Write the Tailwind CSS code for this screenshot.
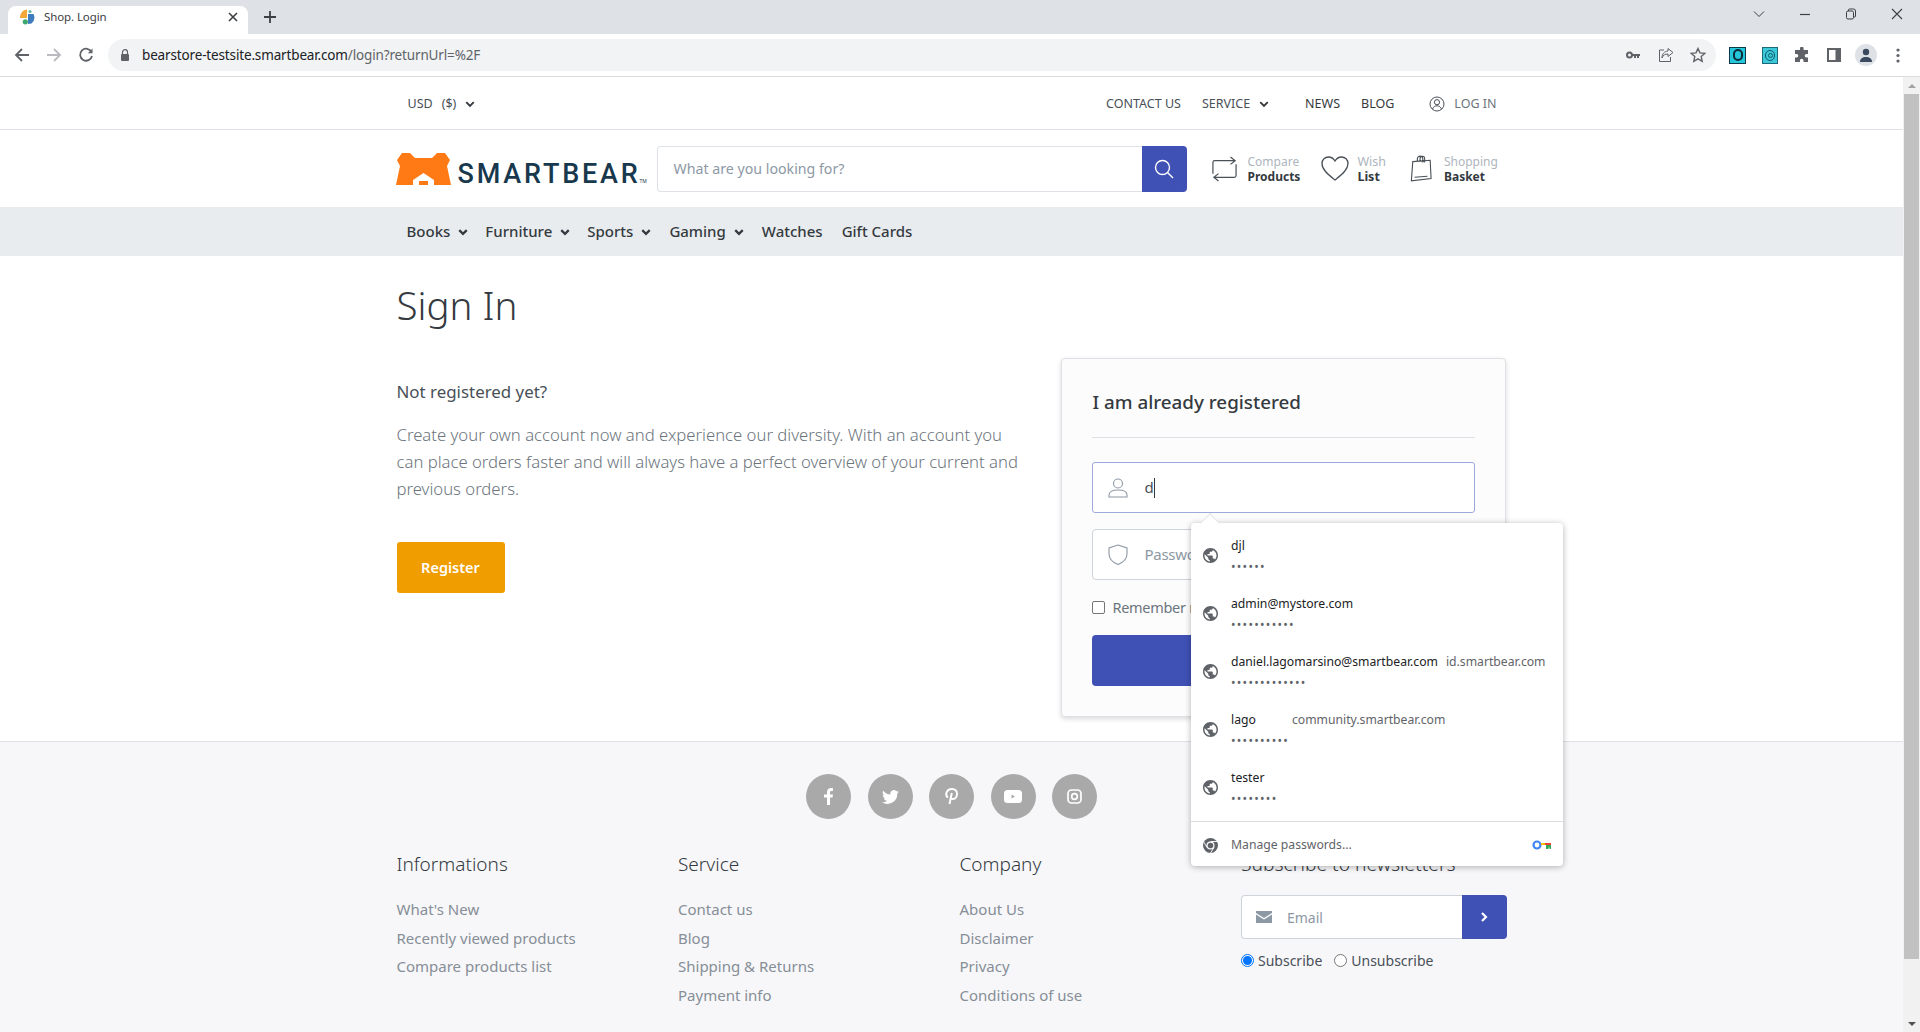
<!DOCTYPE html>
<html lang="en">
<head>
  <meta charset="UTF-8" />
  <meta name="viewport" content="width=device-width, initial-scale=1.0"/>
  <title>Shop. Login</title>
  <script src="https://cdn.jsdelivr.net/npm/@tailwindcss/browser@4"></script>
</head>
<body class="font-['Noto_Sans',sans-serif] bg-white">
<div class="relative w-[1920px] h-[1032px] overflow-hidden flex flex-col">

  <!-- browser tab strip -->
  <div class="h-[34px] shrink-0 bg-[#dee1e6] flex items-end">
    <div class="ml-2 w-[240px] h-[28px] bg-white rounded-t-lg flex items-center pl-[11px] pr-[9px] pb-[6px] text-[#3c4043]">
      <svg class="w-4 h-4 shrink-0" viewBox="0 0 16 16"><path d="M1 9C1 4 4 1 8 0.5V9z" fill="#f4a637"/><circle cx="11" cy="2.5" r="1.6" fill="#67b7a5"/><path d="M9 5h5.5a8 8 0 0 1-2 9.5L9 15z" fill="#3d7dbe"/><circle cx="6.3" cy="12.8" r="2.6" fill="#3fa66d"/></svg>
      <span class="ml-[9px] text-[11.5px] tracking-[-0.1px]">Shop. Login</span>
      <svg class="w-3 h-3 ml-auto" viewBox="0 0 12 12" fill="none" stroke="#3c4043" stroke-width="1.6"><path d="M2 2l8 8M10 2l-8 8"/></svg>
    </div>
    <svg class="w-3.5 h-3.5 ml-[15px] mb-[10px]" viewBox="0 0 14 14" fill="none" stroke="#3c4043" stroke-width="1.8"><path d="M7 1v12M1 7h12"/></svg>
    <div class="ml-auto self-start flex items-center h-[28px] text-[#3c4043]">
      <svg class="w-3 h-3 mr-[34px]" viewBox="0 0 12 12" fill="none" stroke="#3c4043"><path d="M1 3.500l5 5 5-5"/></svg>
      <svg class="w-3 h-3 mr-[34px]" viewBox="0 0 12 12" fill="none" stroke="#3c4043" stroke-width="1.2"><path d="M1 6.500h10"/></svg>
      <svg class="w-3 h-3 mr-[34px]" viewBox="0 0 12 12" fill="none" stroke="#3c4043"><rect x="1.500" y="3" width="7" height="8" rx="1.500"/><path d="M3.500 3V2a1 1 0 0 1 1-1h4a2 2 0 0 1 2 2v5a1 1 0 0 1-1 1h-1"/></svg>
      <svg class="w-3 h-3 mr-[17px]" viewBox="0 0 12 12" fill="none" stroke="#3c4043" stroke-width="1.1"><path d="M1 1l10 10M11 1L1 11"/></svg>
    </div>
  </div>

  <!-- browser toolbar -->
  <div class="h-[43px] shrink-0 bg-white border-b border-[#dadce0] flex items-center">
    <svg class="w-4 h-4 ml-[14px]" viewBox="0 0 16 16" fill="none" stroke="#5f6368" stroke-width="1.8"><path d="M15 8H2M8 2L2 8l6 6"/></svg>
    <svg class="w-4 h-4 ml-[16px]" viewBox="0 0 16 16" fill="none" stroke="#b9bbbe" stroke-width="1.8"><path d="M1 8h13M8 2l6 6-6 6"/></svg>
    <svg class="w-4 h-4 ml-[16px]" viewBox="0 0 16 16" fill="none" stroke="#5f6368" stroke-width="1.8"><path d="M13.500 5A6 6 0 1 0 14 9"/><path d="M14.500 1.500v4.700H9.800z" fill="#5f6368" stroke="none"/></svg>
    <div class="ml-[14px] w-[1608px] h-[32px] bg-[#f1f3f4] rounded-full flex items-center">
      <svg class="w-2.5 h-3 ml-[12px]" viewBox="0 0 10 12"><path d="M2.500 5V3.200a2.500 2.500 0 0 1 5 0V5" fill="none" stroke="#5f6368" stroke-width="1.2"/><rect x="1" y="5" width="8" height="7" rx="1" fill="#5f6368"/></svg>
      <span class="ml-[12px] pt-[1px] text-[13.500px] tracking-[-0.15px] text-[#202124]">bearstore-testsite.smartbear.com<span class="text-[#5f6368]">/login?returnUrl=%2F</span></span>
      <svg class="w-4 h-4 ml-auto" viewBox="0 0 16 16"><circle cx="4.500" cy="8" r="2.500" fill="none" stroke="#5f6368" stroke-width="2"/><path d="M7 7h8v2h-1v2h-2V9h-1v2H9V9H7z" fill="#5f6368"/></svg>
      <svg class="w-4 h-4 ml-[17px]" viewBox="0 0 16 16" fill="none" stroke="#5f6368"><path d="M10 1.500l5 4-5 4V7C7 7 5 8 4 11c0-4 2-6.500 6-7z"/><path d="M6 3H1.500v11.500h11V10"/></svg>
      <svg class="w-4 h-4 ml-[16px] mr-[10px]" viewBox="0 0 16 16" fill="none" stroke="#5f6368" stroke-width="1.4"><path d="M8 1.500l2 4.400 4.800.5-3.600 3.200 1 4.700L8 11.900l-4.200 2.400 1-4.700L1.200 6.400 6 5.900z"/></svg>
    </div>
    <div class="w-[17px] h-[17px] ml-[13px] bg-[#26c6da] border border-[#0b3a4a] flex items-center justify-center"><div class="w-[10px] h-[12px] rounded-full border-2 border-[#0b2a3a]"></div></div>
    <div class="w-[16px] h-[17px] ml-[16px] bg-[#3cc8d8] border border-[#1b6a7a] flex items-center justify-center"><div class="w-[10px] h-[11px] rounded-full border border-[#0f5a6a] flex items-center justify-center"><div class="w-[5px] h-[5px] rounded-full border border-[#0f5a6a]"></div></div></div>
    <svg class="w-4 h-4 ml-[16px]" viewBox="0 0 16 16" fill="#5f6368"><path d="M6 1.500a1.800 1.800 0 0 1 3.600 0V3H14v4h-1.500a1.800 1.800 0 0 0 0 3.600H14V15H9.500v-1.500a1.800 1.800 0 0 0-3.600 0V15H1v-4.500h1.500a1.800 1.800 0 0 0 0-3.600H1V3h5z"/></svg>
    <svg class="w-[14px] h-[14px] ml-[17px]" viewBox="0 0 14 14"><rect width="14" height="14" fill="#5f6368"/><rect x="2" y="2" width="6.500" height="10" fill="#fff"/></svg>
    <div class="w-[22px] h-[22px] ml-[14px] rounded-full bg-[#dee1e6] flex items-center justify-center">
      <svg class="w-3.5 h-3.5" viewBox="0 0 14 14" fill="#3c4a5f"><circle cx="7" cy="4" r="3.200"/><path d="M1 14c0-3.500 2.500-5 6-5s6 1.500 6 5z"/></svg>
    </div>
    <svg class="w-1 h-[15px] ml-[19px]" viewBox="0 0 4 15" fill="#5f6368"><circle cx="2" cy="2" r="1.600"/><circle cx="2" cy="7.500" r="1.600"/><circle cx="2" cy="13" r="1.600"/></svg>
  </div>

  <!-- page + scrollbar -->
  <div class="flex flex-1 min-h-0">
    <div class="w-[1903px] shrink-0 overflow-hidden">

      <!-- top links -->
      <div class="h-[53px] border-b border-[#dee2e6]">
        <div class="w-[1140px] mx-auto px-[15px] pt-[2px] h-full flex items-center text-[12.500px] text-[#495057]">
          <span class="ml-[11px]">USD</span>
          <span class="ml-[9px]">($)</span>
          <svg class="w-2.5 h-2.5 ml-[9px]" viewBox="0 0 8 8" fill="none" stroke="#343a40" stroke-width="1.500"><path d="M1 2.500l3 3 3-3"/></svg>
          <span class="ml-auto">CONTACT US</span>
          <span class="ml-[21px]">SERVICE</span>
          <svg class="w-2.5 h-2.5 ml-[9px]" viewBox="0 0 8 8" fill="none" stroke="#343a40" stroke-width="1.500"><path d="M1 2.500l3 3 3-3"/></svg>
          <span class="ml-[36px] text-[#343a40]">NEWS</span>
          <span class="ml-[21px] text-[#343a40]">BLOG</span>
          <svg class="w-4 h-4 ml-[35px] -mt-[1px]" viewBox="0 0 16 16" fill="none" stroke="#495057"><circle cx="8" cy="8" r="7"/><circle cx="8" cy="6.200" r="2.600"/><path d="M3.500 13c.8-2.200 2.500-3.200 4.500-3.200s3.700 1 4.500 3.200"/></svg>
          <span class="ml-[9px] mr-[10px] text-[#6c757d]">LOG IN</span>
        </div>
      </div>

      <!-- logo, search, tools -->
      <div class="h-[77px]">
        <div class="w-[1140px] mx-auto pl-[15px] pr-[16px] h-full flex items-center">
          <div class="w-[260px] shrink-0 flex items-end">
            <svg class="w-[55px] h-[32px] shrink-0 -ml-[1px]" viewBox="0 0 55 32"><path d="M6 0h8l5 5h17l5-5h8l5 7-3 6 4 19H0l4-19-3-6z" fill="#ff7a14"/><path d="M17 32v-5l10.500-7L38 27v5h-6v-4h-9v4z" fill="#fff"/><rect x="23" y="28" width="9" height="4" fill="#ff7a14"/></svg>
            <span class="ml-[7px] font-['Roboto',sans-serif] font-medium text-[#17384d] text-[27px] leading-[27px] tracking-[2.800px] translate-y-[3px]">SMARTBEAR</span>
            <span class="text-[5px] text-[#17384d] leading-[8px] -ml-[1px]">TM</span>
          </div>
          <div class="w-[530px] h-[46px] shrink-0 flex">
            <div class="flex-1 border border-[#dee2e6] border-r-0 rounded-l-[4px] flex items-center pl-[16px] text-[14.200px] text-[#8d98a5]">What are you looking for?</div>
            <div class="w-[45px] bg-[#3f51b5] rounded-r-[4px] flex items-center justify-center">
              <svg class="w-5 h-5" viewBox="0 0 20 20" fill="none" stroke="#fff" stroke-width="1.400"><circle cx="8.500" cy="8.500" r="7"/><path d="M13.500 13.500L19 19"/></svg>
            </div>
          </div>
          <svg class="w-[25px] h-[28px] ml-[25px]" viewBox="0 0 27 28" fill="none" stroke="#495057" stroke-width="1.300"><path d="M20 1l5 4-5 4M24.500 5H3a2 2 0 0 0-2 2v12M7 27l-5-4 5-4M2.500 23H24a2 2 0 0 0 2-2V9"/></svg>
          <div class="ml-[11px] pt-[2px] text-[12px] leading-[14.500px]">
            <div class="text-[#adb5bd]">Compare</div>
            <div class="text-[#343a40] font-bold">Products</div>
          </div>
          <svg class="w-[28px] h-[25px] ml-[21px]" viewBox="0 0 28 25" fill="none" stroke="#495057" stroke-width="1.300"><path d="M14 24C8 19 1 14 1 7.500 1 3.500 4 1 7.500 1c3 0 5 1.500 6.500 4 1.500-2.500 3.500-4 6.500-4C24 1 27 3.500 27 7.500 27 14 20 19 14 24z"/></svg>
          <div class="ml-[8px] pt-[2px] text-[12.500px] leading-[14.500px]">
            <div class="text-[#adb5bd]">Wish</div>
            <div class="text-[#343a40] font-bold">List</div>
          </div>
          <svg class="w-[22px] h-[29px] ml-[24px]" viewBox="0 0 24 29" fill="none" stroke="#495057" stroke-width="1.200"><path d="M3 7l19-1.500 1 20L1.500 28zM8 7V4c0-4 6-4 6 0v4M11 6V3.500c0-3 5-3.500 5 0V8M5 24l14-1"/></svg>
          <div class="ml-[12px] pt-[2px] text-[12px] leading-[14.500px]">
            <div class="text-[#adb5bd]">Shopping</div>
            <div class="text-[#343a40] font-bold">Basket</div>
          </div>
        </div>
      </div>

      <!-- main nav -->
      <div class="h-[49px] bg-[#e9ecef]">
        <div class="w-[1140px] mx-auto px-[15px] h-full flex items-center text-[15px] font-medium text-[#343a40]">
          <span class="ml-[10px]">Books</span>
          <svg class="w-2.5 h-2.5 ml-[8px]" viewBox="0 0 8 8" fill="none" stroke="#343a40" stroke-width="1.800"><path d="M1 2.500l3 3 3-3"/></svg>
          <span class="ml-[17px]">Furniture</span>
          <svg class="w-2.5 h-2.5 ml-[8px]" viewBox="0 0 8 8" fill="none" stroke="#343a40" stroke-width="1.800"><path d="M1 2.500l3 3 3-3"/></svg>
          <span class="ml-[17px]">Sports</span>
          <svg class="w-2.5 h-2.5 ml-[8px]" viewBox="0 0 8 8" fill="none" stroke="#343a40" stroke-width="1.800"><path d="M1 2.500l3 3 3-3"/></svg>
          <span class="ml-[18px]">Gaming</span>
          <svg class="w-2.5 h-2.5 ml-[8px]" viewBox="0 0 8 8" fill="none" stroke="#343a40" stroke-width="1.800"><path d="M1 2.500l3 3 3-3"/></svg>
          <span class="ml-[18px]">Watches</span>
          <span class="ml-[19px]">Gift Cards</span>
        </div>
      </div>

      <!-- sign in -->
      <div class="h-[486px] border-b border-[#dee2e6]">
        <div class="w-[1140px] mx-auto pl-[15px] pr-[16px]">
          <h1 class="pt-[22px] text-[38.500px] leading-[54px] font-light text-[#343a40]">Sign In</h1>
          <div class="mt-[26px] flex justify-between items-start">
            <div class="w-[630px] pt-[22px]">
              <h2 class="text-[16.900px] leading-[24px] text-[#495057]">Not registered yet?</h2>
              <p class="mt-[17px] text-[16.700px] leading-[27px] font-light text-[#6c757d]">Create your own account now and experience our diversity. With an account you can place orders faster and will always have a perfect overview of your current and previous orders.</p>
              <button class="mt-[40px] w-[108px] h-[51px] pt-[1px] rounded-[3px] bg-[#f09d00] text-white text-[14.500px] font-semibold">Register</button>
            </div>
            <div class="w-[445px] h-[359px] p-[30px] bg-[#fcfcfc] border border-[#dee2e6] rounded-[4px] shadow-[0_2px_5px_rgba(0,0,0,0.15)]">
              <h3 class="pl-[1px] text-[18.800px] leading-[26px] font-medium text-[#343a40]">I am already registered</h3>
              <div class="mt-[22px] border-t border-[#dee2e6]"></div>
              <div class="mt-[24px] h-[51px] bg-white border border-[#9fa8da] rounded-[3px] flex items-center">
                <svg class="w-5 h-5 ml-[15px] shrink-0" viewBox="0 0 20 20" fill="none" stroke="#8d98a5" stroke-width="1.100"><circle cx="10" cy="5.500" r="4.500"/><path d="M1 19v-2c0-3 3-5 9-5s9 2 9 5v2z"/></svg>
                <span class="ml-[17px] text-[15px] text-[#495057]">d</span>
                <div class="w-px h-[20px] bg-[#343a40]"></div>
              </div>
              <div class="mt-[16px] h-[51px] bg-white border border-[#ced4da] rounded-[4px] flex items-center">
                <svg class="w-5 h-[21px] ml-[15px] shrink-0" viewBox="0 0 20 21" fill="none" stroke="#8d98a5" stroke-width="1.100"><path d="M10 1l9 3v6c0 5-4 8.500-9 10.500C5 18.500 1 15 1 10V4z"/></svg>
                <span class="ml-[17px] text-[15px] tracking-[-0.3px] text-[#8d98a5]">Password</span>
              </div>
              <label class="mt-[17px] flex items-center h-[21px]">
                <span class="w-[13px] h-[13px] border border-[#767676] rounded-[2px] bg-white"></span>
                <span class="ml-[8px] text-[14.500px] tracking-[-0.3px] text-[#6c757d]">Remember me</span>
              </label>
              <div class="mt-[17px] h-[51px] bg-[#3f51b5] rounded-[4px]"></div>
            </div>
          </div>
        </div>
      </div>

      <!-- footer -->
      <div class="h-[300px] bg-[#f7f7fa]">
        <div class="pt-[32px] flex justify-center gap-[16.500px]">
          <div class="w-[45px] h-[45px] rounded-full bg-[#a9a9a9] flex items-center justify-center">
            <svg class="w-[9px] h-[17px]" viewBox="0 0 9 17" fill="#fff"><path d="M3 17V9.500H0V6.500h3V4.500C3 1.500 4.500 0 7 0h2v3H7.500C6.300 3 6 3.600 6 4.500v2h3l-.5 3H6V17z"/></svg>
          </div>
          <div class="w-[45px] h-[45px] rounded-full bg-[#a9a9a9] flex items-center justify-center">
            <svg class="w-[17px] h-[14px]" viewBox="0 0 17 14" fill="#fff"><path d="M17 1.700c-.6.300-1.300.500-2 .600.700-.400 1.300-1.100 1.500-1.900-.7.400-1.400.700-2.200.800A3.500 3.500 0 0 0 8.400 4.400 9.800 9.800 0 0 1 1.200.7a3.500 3.500 0 0 0 1.100 4.600c-.6 0-1.100-.2-1.600-.4 0 1.700 1.200 3.100 2.800 3.400-.5.100-1 .2-1.600.1.500 1.400 1.700 2.300 3.300 2.400A7 7 0 0 1 0 12.300 10 10 0 0 0 15.300 3.500c.7-.5 1.300-1.100 1.700-1.800z"/></svg>
          </div>
          <div class="w-[45px] h-[45px] rounded-full bg-[#a9a9a9] flex items-center justify-center">
            <svg class="w-[13px] h-[17px]" viewBox="0 0 13 17" fill="none" stroke="#fff" stroke-width="2"><path d="M3 9.500C1.500 8.500 1 7 1.300 5.500 2 2.500 4.500 1 7 1c3 0 5 2 5 4.500 0 3-1.500 5.500-4 5.500-1.200 0-2-.8-2-1.500"/><path d="M6.800 5L4.500 16"/></svg>
          </div>
          <div class="w-[45px] h-[45px] rounded-full bg-[#a9a9a9] flex items-center justify-center">
            <svg class="w-[18px] h-[13px]" viewBox="0 0 18 13"><rect width="18" height="13" rx="3.500" fill="#fff"/><path d="M7.500 4.500l3.500 2-3.500 2z" fill="#a9a9a9"/></svg>
          </div>
          <div class="w-[45px] h-[45px] rounded-full bg-[#a9a9a9] flex items-center justify-center">
            <svg class="w-[15px] h-[15px]" viewBox="0 0 15 15" fill="none" stroke="#fff" stroke-width="1.700"><rect x="1" y="1" width="13" height="13" rx="3.500"/><circle cx="7.500" cy="7.500" r="2.800"/></svg>
          </div>
        </div>
        <div class="w-[1140px] mx-auto px-[15px] mt-[32px] grid grid-cols-[281.500px_281.500px_281.500px_1fr]">
          <div>
            <h4 class="text-[19px] leading-[26px] font-light text-[#343a40]">Informations</h4>
            <ul class="mt-[18px] text-[15px] leading-[28.700px] text-[#868e96]">
              <li>What's New</li>
              <li>Recently viewed products</li>
              <li>Compare products list</li>
            </ul>
          </div>
          <div>
            <h4 class="text-[19px] leading-[26px] font-light text-[#343a40]">Service</h4>
            <ul class="mt-[18px] text-[15px] leading-[28.700px] text-[#868e96]">
              <li>Contact us</li>
              <li>Blog</li>
              <li>Shipping &amp; Returns</li>
              <li>Payment info</li>
            </ul>
          </div>
          <div>
            <h4 class="text-[19px] leading-[26px] font-light text-[#343a40]">Company</h4>
            <ul class="mt-[18px] text-[15px] leading-[28.700px] text-[#868e96]">
              <li>About Us</li>
              <li>Disclaimer</li>
              <li>Privacy</li>
              <li>Conditions of use</li>
            </ul>
          </div>
          <div>
            <h4 class="text-[19.300px] leading-[26px] font-light text-[#343a40]">Subscribe to newsletters</h4>
            <div class="mt-[18px] flex h-[44px]">
              <div class="flex-1 bg-white border border-[#ced4da] border-r-0 rounded-l-[4px] flex items-center">
                <svg class="w-4 h-3 ml-[14px]" viewBox="0 0 16 12" fill="#8d98a5"><path d="M0 0h16v2L8 7 0 2z"/><path d="M0 3.500V12h16V3.500L8 8.500z"/></svg>
                <span class="ml-[15px] text-[14px] text-[#8d98a5]">Email</span>
              </div>
              <div class="w-[45px] bg-[#3f51b5] rounded-r-[4px] flex items-center justify-center">
                <svg class="w-2 h-2.5" viewBox="0 0 8 10" fill="none" stroke="#fff" stroke-width="2.200"><path d="M2 1l4 4-4 4"/></svg>
              </div>
            </div>
            <div class="mt-[11px] flex items-center text-[14px] text-[#495057]">
              <span class="w-[13px] h-[13px] rounded-full border border-[#0075ff] flex items-center justify-center"><span class="w-[9px] h-[9px] rounded-full bg-[#0075ff]"></span></span>
              <span class="ml-[4px]">Subscribe</span>
              <span class="ml-[12px] w-[13px] h-[13px] rounded-full border border-[#767676] bg-white"></span>
              <span class="ml-[4px]">Unsubscribe</span>
            </div>
          </div>
        </div>
      </div>
    </div>

    <!-- scrollbar -->
    <div class="w-[17px] shrink-0 bg-[#f1f1f1] flex flex-col items-center">
      <svg class="w-2 h-1 mt-[7px]" viewBox="0 0 8 4" fill="#a3a3a3"><path d="M4 0l4 4H0z"/></svg>
      <div class="w-[15px] h-[865px] mt-[6px] bg-[#c1c1c1]"></div>
      <svg class="w-2 h-1 mt-auto mb-[6px]" viewBox="0 0 8 4" fill="#505050"><path d="M0 0h8L4 4z"/></svg>
    </div>
  </div>

  <!-- saved passwords dropdown -->
  <div class="absolute left-[1191px] top-[523px] w-[372px] h-[343px] bg-white rounded-[4px] shadow-[0_1px_6px_rgba(0,0,0,0.3)] text-[12.200px]">
    <div class="absolute left-[12px] -top-[7px] w-[14px] h-[14px] rotate-45 bg-white border-l border-t border-[#e5e5e5]"></div>
    <div class="relative pt-[1px] h-[298px] flex flex-col">
      <div class="h-[58px] pt-[2px] flex items-center pl-[12px]">
        <svg class="w-[15px] h-[15px] mt-[2px] shrink-0" viewBox="2 2 20 20" fill="#5f6368"><path d="M12 2C6.480 2 2 6.480 2 12s4.480 10 10 10 10-4.480 10-10S17.520 2 12 2zm-1 17.930c-3.950-.490-7-3.850-7-7.930 0-.620.080-1.210.210-1.790L9 15v1c0 1.100.900 2 2 2v1.930zm6.900-2.540c-.260-.810-1-1.390-1.900-1.390h-1v-3c0-.550-.450-1-1-1H8v-2h2c.550 0 1-.450 1-1V7h2c1.100 0 2-.900 2-2v-.410c2.930 1.190 5 4.060 5 7.410 0 2.080-.800 3.970-2.100 5.390z"/></svg>
        <div class="ml-[13px]"><div class="h-[26px] leading-[26px] text-[#202124]">djl</div><div class="text-[12px] tracking-[1.300px] leading-[16px] text-[#5f6368]">••••••</div></div>
      </div>
      <div class="h-[58px] pt-[2px] flex items-center pl-[12px]">
        <svg class="w-[15px] h-[15px] mt-[2px] shrink-0" viewBox="2 2 20 20" fill="#5f6368"><path d="M12 2C6.480 2 2 6.480 2 12s4.480 10 10 10 10-4.480 10-10S17.520 2 12 2zm-1 17.930c-3.950-.490-7-3.850-7-7.930 0-.620.080-1.210.210-1.790L9 15v1c0 1.100.900 2 2 2v1.930zm6.900-2.540c-.260-.810-1-1.390-1.900-1.390h-1v-3c0-.550-.450-1-1-1H8v-2h2c.550 0 1-.450 1-1V7h2c1.100 0 2-.900 2-2v-.410c2.930 1.190 5 4.060 5 7.410 0 2.080-.800 3.970-2.100 5.390z"/></svg>
        <div class="ml-[13px]"><div class="h-[26px] leading-[26px] text-[#202124]">admin@mystore.com</div><div class="text-[12px] tracking-[1.300px] leading-[16px] text-[#5f6368]">•••••••••••</div></div>
      </div>
      <div class="h-[58px] pt-[2px] flex items-center pl-[12px]">
        <svg class="w-[15px] h-[15px] mt-[2px] shrink-0" viewBox="2 2 20 20" fill="#5f6368"><path d="M12 2C6.480 2 2 6.480 2 12s4.480 10 10 10 10-4.480 10-10S17.520 2 12 2zm-1 17.930c-3.950-.490-7-3.850-7-7.930 0-.620.080-1.210.210-1.790L9 15v1c0 1.100.900 2 2 2v1.930zm6.900-2.540c-.260-.810-1-1.390-1.900-1.390h-1v-3c0-.550-.450-1-1-1H8v-2h2c.550 0 1-.450 1-1V7h2c1.100 0 2-.900 2-2v-.410c2.930 1.190 5 4.060 5 7.410 0 2.080-.800 3.970-2.100 5.390z"/></svg>
        <div class="ml-[13px]"><div class="h-[26px] leading-[26px] text-[#202124] whitespace-nowrap">daniel.lagomarsino@smartbear.com<span class="ml-[8px] text-[#5f6368]">id.smartbear.com</span></div><div class="text-[12px] tracking-[1.300px] leading-[16px] text-[#5f6368]">•••••••••••••</div></div>
      </div>
      <div class="h-[58px] pt-[2px] flex items-center pl-[12px]">
        <svg class="w-[15px] h-[15px] mt-[2px] shrink-0" viewBox="2 2 20 20" fill="#5f6368"><path d="M12 2C6.480 2 2 6.480 2 12s4.480 10 10 10 10-4.480 10-10S17.520 2 12 2zm-1 17.930c-3.950-.490-7-3.850-7-7.930 0-.620.080-1.210.210-1.790L9 15v1c0 1.100.900 2 2 2v1.930zm6.900-2.540c-.260-.810-1-1.390-1.900-1.390h-1v-3c0-.550-.450-1-1-1H8v-2h2c.550 0 1-.450 1-1V7h2c1.100 0 2-.900 2-2v-.410c2.930 1.190 5 4.060 5 7.410 0 2.080-.800 3.970-2.100 5.390z"/></svg>
        <div class="ml-[13px]"><div class="h-[26px] leading-[26px] text-[#202124] flex"><span class="w-[61px]">lago</span><span class="text-[#5f6368]">community.smartbear.com</span></div><div class="text-[12px] tracking-[1.300px] leading-[16px] text-[#5f6368]">••••••••••</div></div>
      </div>
      <div class="h-[58px] pt-[2px] flex items-center pl-[12px]">
        <svg class="w-[15px] h-[15px] mt-[2px] shrink-0" viewBox="2 2 20 20" fill="#5f6368"><path d="M12 2C6.480 2 2 6.480 2 12s4.480 10 10 10 10-4.480 10-10S17.520 2 12 2zm-1 17.930c-3.950-.490-7-3.850-7-7.930 0-.620.080-1.210.210-1.790L9 15v1c0 1.100.900 2 2 2v1.930zm6.900-2.540c-.260-.810-1-1.390-1.900-1.390h-1v-3c0-.550-.450-1-1-1H8v-2h2c.550 0 1-.450 1-1V7h2c1.100 0 2-.900 2-2v-.410c2.930 1.190 5 4.060 5 7.410 0 2.080-.800 3.970-2.100 5.390z"/></svg>
        <div class="ml-[13px]"><div class="h-[26px] leading-[26px] text-[#202124]">tester</div><div class="text-[12px] tracking-[1.300px] leading-[16px] text-[#5f6368]">••••••••</div></div>
      </div>
    </div>
    <div class="relative border-t border-[#dadce0] h-[45px] pt-[2px] flex items-center pl-[12px] pr-[12px]">
      <svg class="w-[15px] h-[15px] shrink-0" viewBox="0 0 16 16"><circle cx="8" cy="8" r="8" fill="#5f6368"/><circle cx="8" cy="8" r="4.300" fill="#fff"/><circle cx="8" cy="8" r="3" fill="#5f6368"/><path d="M8 3.700h7M4.300 10.200L1 4.500M11.700 10.200L8 16" stroke="#fff" stroke-width="1"/></svg>
      <span class="ml-[13px] text-[#5f6368]">Manage passwords...</span>
      <svg class="w-[19px] h-[10px] ml-auto" viewBox="0 0 19 10" fill="none"><circle cx="5" cy="5" r="3.500" stroke="#4285f4" stroke-width="2.200"/><path d="M9 4h4" stroke="#fbbc05" stroke-width="2"/><path d="M13 4h6" stroke="#ea4335" stroke-width="2"/><path d="M14 5h5v4h-1.500V7.500h-1V9H14z" fill="#34a853"/></svg>
    </div>
  </div>

</div>
</body>
</html>
